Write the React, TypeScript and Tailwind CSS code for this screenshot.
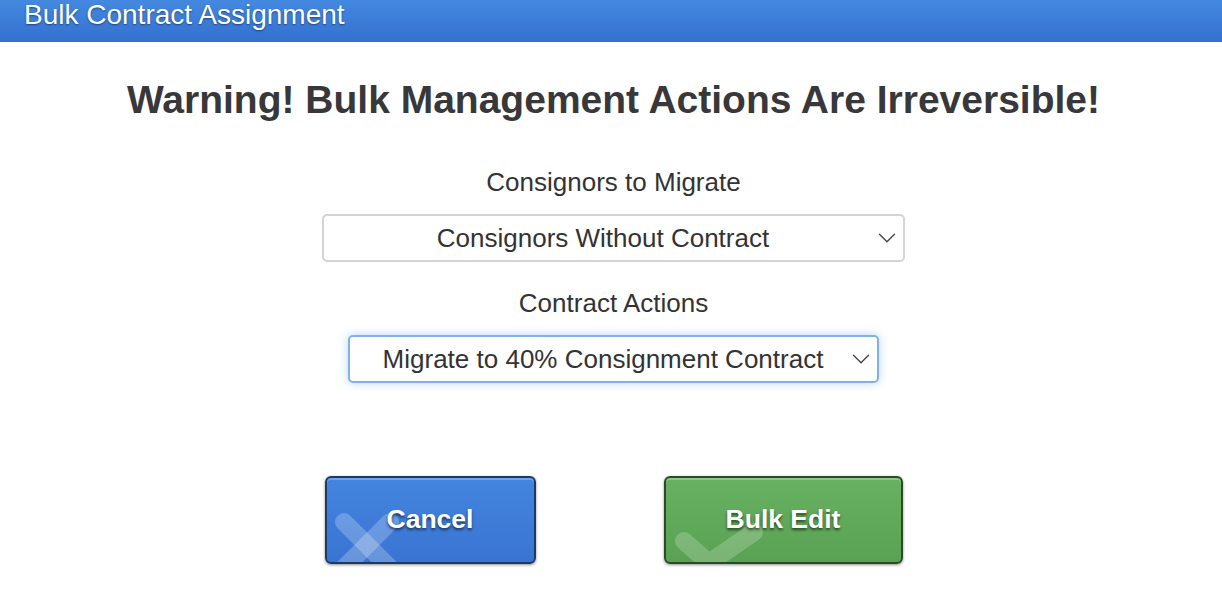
import { ChevronDown } from "lucide-react";

const font = { fontFamily: '"Liberation Sans", Arial, Helvetica, sans-serif' };

function FakeSelect({
  value,
  width,
  focused,
}: {
  value: string;
  width: string;
  focused?: boolean;
}) {
  return (
    <div
      className={`relative flex h-[48px] items-center justify-center rounded-[5px] border-2 bg-white pl-[12px] pr-[33px] ${width} ${
        focused
          ? "border-[#7fb2ea] shadow-[0_0_10px_rgba(102,160,233,0.45)]"
          : "border-[#d4d4d4]"
      }`}
    >
      <span className="text-[26px] leading-none text-[#333]">{value}</span>
      <ChevronDown
        size={30}
        strokeWidth={1.1}
        className="absolute right-[1px] top-1/2 -translate-y-1/2 text-[#444]"
      />
    </div>
  );
}

export default function App() {
  return (
    <div className="min-h-[600px] bg-white" style={font}>
      {/* ---------------- Header ---------------- */}
      <div className="h-[42px] bg-gradient-to-b from-[#4489e0] to-[#3470cf] pl-[24px]">
        <h2 className="text-[28px] leading-[30px] text-white [text-shadow:0_1px_2px_rgba(0,0,0,0.45)]">
          Bulk Contract Assignment
        </h2>
      </div>

      {/* ---------------- Body ---------------- */}
      <div className="flex flex-col items-center pl-[5px]">
        <h1 className="mt-[36px] text-[39px] font-bold leading-[44px] text-[#38383a]">
          Warning! Bulk Management Actions Are Irreversible!
        </h1>

        <p className="mt-[45px] text-[26px] leading-[30px] text-[#333]">
          Consignors to Migrate
        </p>
        <div className="mt-[17px]">
          <FakeSelect value="Consignors Without Contract" width="w-[583px]" />
        </div>

        <p className="mt-[26px] text-[26px] leading-[30px] text-[#333]">
          Contract Actions
        </p>
        <div className="mt-[17px]">
          <FakeSelect
            value="Migrate to 40% Consignment Contract"
            width="w-[531px]"
            focused
          />
        </div>

        {/* ---------------- Buttons ---------------- */}
        <div className="mt-[93px] flex gap-[128px]">
          <button className="relative h-[88px] w-[211px] overflow-hidden rounded-[6px] border-2 border-[#1d3a66] bg-gradient-to-b from-[#4385df] to-[#3a74d2] shadow-[0_1px_3px_rgba(0,0,0,0.45),inset_0_2px_0_rgba(255,255,255,0.25)]">
            <svg
              className="absolute left-0 top-0"
              width="211"
              height="88"
              viewBox="0 0 211 88"
            >
              <g stroke="rgba(255,255,255,0.23)" strokeWidth="18" strokeLinecap="round">
                <line x1="17" y1="44" x2="72" y2="99" />
                <line x1="63" y1="44" x2="8" y2="99" />
              </g>
            </svg>
            <span className="relative text-[26.5px] font-bold text-white [text-shadow:0_2px_3px_rgba(0,0,0,0.6)]">
              Cancel
            </span>
          </button>

          <button className="relative h-[88px] w-[239px] overflow-hidden rounded-[6px] border-2 border-[#2a4a28] bg-gradient-to-b from-[#69b162] to-[#5aa253] shadow-[0_1px_3px_rgba(0,0,0,0.45),inset_0_2px_0_rgba(255,255,255,0.25)]">
            <svg
              className="absolute left-0 top-0"
              width="239"
              height="88"
              viewBox="0 0 239 88"
            >
              <polyline
                points="18,63 43,85 88,54"
                fill="none"
                stroke="rgba(255,255,255,0.2)"
                strokeWidth="18"
                strokeLinecap="round"
                strokeLinejoin="round"
              />
            </svg>
            <span className="relative text-[26.5px] font-bold text-white [text-shadow:0_2px_3px_rgba(0,0,0,0.6)]">
              Bulk Edit
            </span>
          </button>
        </div>
      </div>
    </div>
  );
}
